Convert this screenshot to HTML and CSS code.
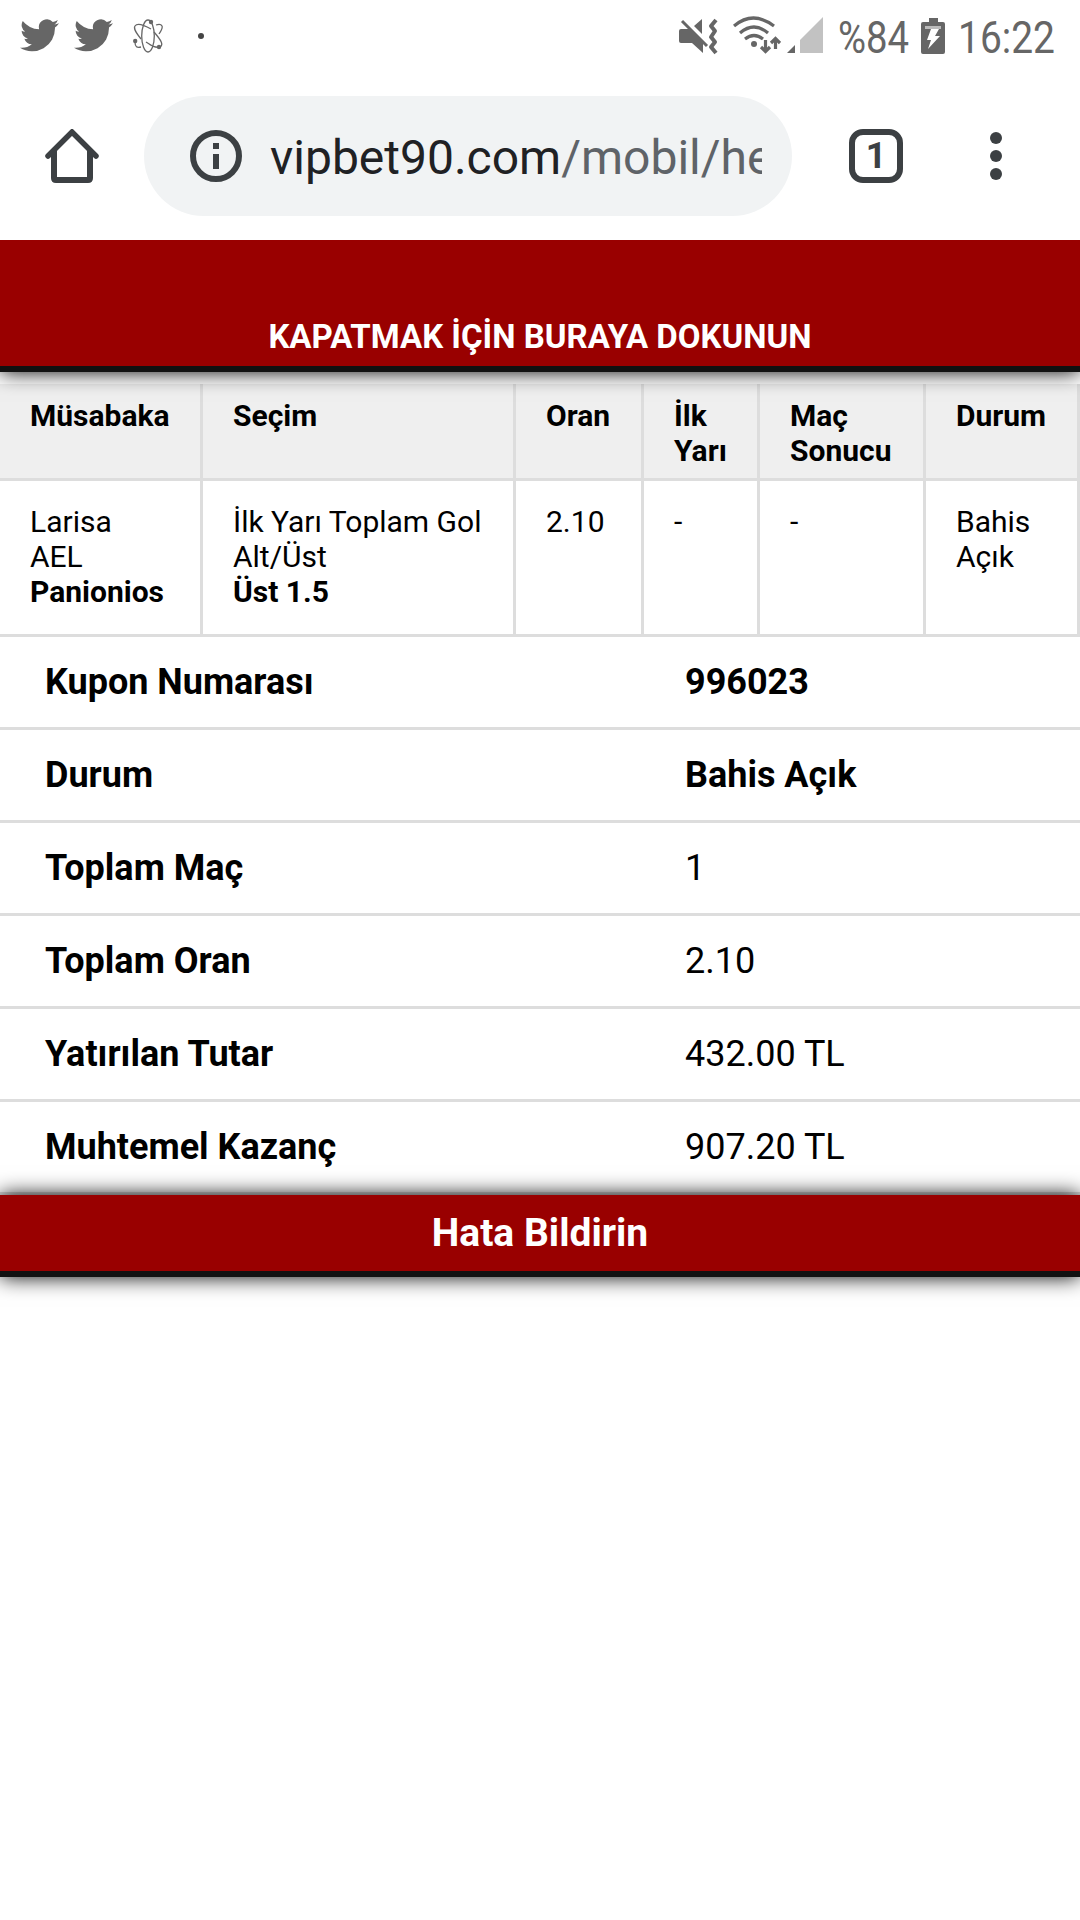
FILE: index.html
```html
<!DOCTYPE html>
<html lang="tr">
<head>
<meta charset="utf-8">
<title>Kupon</title>
<link rel="stylesheet" href="styles.css">
</head>
<body>
<header class="status">
  <svg class="bird" viewBox="0 0 24 20"><path d="M24 2.4a10 10 0 0 1-2.8.8A4.900 4.900 0 0 0 23.300.5a9.900 9.900 0 0 1-3.100 1.200 4.900 4.900 0 0 0-8.400 4.500A14 14 0 0 1 1.700 1a4.900 4.900 0 0 0 1.500 6.600 4.900 4.900 0 0 1-2.200-.6 4.900 4.900 0 0 0 3.900 4.900 5 5 0 0 1-2.200.1 4.900 4.900 0 0 0 4.600 3.400A9.900 9.900 0 0 1 0 17.500 14 14 0 0 0 21.500 5.100 10 10 0 0 0 24 2.400z"/></svg>
  <svg class="bird" viewBox="0 0 24 20"><path d="M24 2.4a10 10 0 0 1-2.800.8A4.900 4.900 0 0 0 23.300.5a9.900 9.900 0 0 1-3.100 1.200 4.900 4.900 0 0 0-8.400 4.500A14 14 0 0 1 1.700 1a4.900 4.900 0 0 0 1.500 6.600 4.900 4.900 0 0 1-2.200-.6 4.900 4.900 0 0 0 3.900 4.900 5 5 0 0 1-2.200.1 4.900 4.900 0 0 0 4.600 3.400A9.900 9.900 0 0 1 0 17.500 14 14 0 0 0 21.500 5.100 10 10 0 0 0 24 2.400z"/></svg>
  <svg class="atom" viewBox="0 0 30 34"><g fill="none" stroke="#666" stroke-width="1.300"><ellipse cx="15" cy="17" rx="6.300" ry="16"/><path d="M18 10C11 6 4 4 2 7s2 8 6 13M23 6c3-1 5-1 6 1s-1 5-3 8M13 23c6 4 9 6 14 5 4-2 1-7-6-15M8 28c-4 1-6 0-6-5"/></g><circle cx="18" cy="3" r="2.200"/><circle cx="2.200" cy="22" r="2.200"/><circle cx="26" cy="28" r="2.200"/></svg>
  <svg class="dot" viewBox="0 0 6 6"><circle cx="3" cy="3" r="3" fill="#444"/></svg>
  <svg class="mute" viewBox="0 0 39 38"><path d="M2 12h10l12 13v11L13 26H2q-2 0-2-2V14q0-2 2-2zM15 9l8-7v15z"/><path d="M3 4l25 25" fill="none" stroke="#666" stroke-width="3"/><path d="M37 3l-5 6 4 5-4 6 4 5-4 5 5 6" fill="none" stroke="#666" stroke-width="4" stroke-linejoin="round"/></svg>
  <svg class="wifi" viewBox="0 0 48 38"><g fill="none" stroke="#666" stroke-width="3.200"><path d="M1 10q19-16 40 0M7 17q14-12 28 0M12 23q9-7 18 0"/><path d="M32.500 24v10M28 31l4.500 4.500L37 31M42.500 33V23M38 27l4.500-4.500L47 27"/></g><circle cx="21" cy="28" r="3"/></svg>
  <svg class="signal" viewBox="0 0 36 36"><path d="M0 36l8-8v8z"/><path d="M13 36V23L36 0v36z" fill="#c2c2c2"/></svg>
  <span class="stat pct">%84</span>
  <svg class="battery" viewBox="0 0 24 36"><path d="M8 0h9v4h5q2 0 2 2v28q0 2-2 2H2q-2 0-2-2V6q0-2 2-2h6z"/><path d="M4 8h16v3H4z" fill="#bbb"/><path d="M10 11h8l-4 7h5L7 31l3-9H6z" fill="#fff"/></svg>
  <span class="stat clock">16:22</span>
</header>
<nav class="toolbar">
  <svg class="home" viewBox="0 0 54 54" fill="none" stroke="#3c4043" stroke-width="6"><path d="M9 20v29q0 2 2 2h32q2 0 2-2V20"/><path d="M3 27L27 3l24 24" stroke-linecap="round" stroke-width="5.500"/></svg>
  <div class="address">
    <svg class="info" viewBox="0 0 52 52"><circle cx="26" cy="26" r="23" fill="none" stroke="#3c4043" stroke-width="6"/><path d="M23 13h6v6h-6zM23 24h6v15h-6z" fill="#3c4043"/></svg>
    <div class="url">vipbet90.com<span class="path">/mobil/he</span></div>
  </div>
  <div class="tabs">1</div>
  <svg class="more" viewBox="0 0 12 48" fill="#3c4043"><circle cx="6" cy="6" r="6"/><circle cx="6" cy="24" r="6"/><circle cx="6" cy="42" r="6"/></svg>
</nav>
<main>
  <div class="close">KAPATMAK İÇİN BURAYA DOKUNUN</div>
  <table class="bets">
    <colgroup><col class="c1"><col class="c2"><col class="c3"><col class="c4"><col class="c5"><col class="c6"></colgroup>
    <tr><th>Müsabaka</th><th>Seçim</th><th>Oran</th><th>İlk<br>Yarı</th><th>Maç<br>Sonucu</th><th>Durum</th></tr>
    <tr><td>Larisa<br>AEL<br><b>Panionios</b></td><td>İlk Yarı Toplam Gol<br>Alt/Üst<br><b>Üst 1.5</b></td><td>2.10</td><td>-</td><td>-</td><td>Bahis<br>Açık</td></tr>
  </table>
  <dl class="summary">
    <div class="row"><dt>Kupon Numarası</dt><dd><b>996023</b></dd></div>
    <div class="row"><dt>Durum</dt><dd><b>Bahis Açık</b></dd></div>
    <div class="row"><dt>Toplam Maç</dt><dd>1</dd></div>
    <div class="row"><dt>Toplam Oran</dt><dd>2.10</dd></div>
    <div class="row"><dt>Yatırılan Tutar</dt><dd>432.00 TL</dd></div>
    <div class="row"><dt>Muhtemel Kazanç</dt><dd>907.20 TL</dd></div>
  </dl>
  <div class="report">Hata Bildirin</div>
</main>
</body>
</html>
```
FILE: styles.css
```css
* { box-sizing: border-box; }
body {
  margin: 0;
  width: 1080px;
  height: 1920px;
  overflow: hidden;
  background: #fff;
  color: #000;
  font-family: Roboto, "Liberation Sans", sans-serif;
}
svg { display: block; flex: none; }
b, th, dt { font-weight: 700; }

.status {
  display: flex;
  align-items: flex-start;
  height: 72px;
  padding-left: 20px;
  color: #666;
  fill: #666;
}
.bird { width: 39px; height: 33px; margin: 19px 15px 0 0; }
.atom { width: 30px; height: 34px; margin: 19px 0 0 5px; }
.dot { width: 6px; height: 6px; margin: 33px 0 0 35px; }
.mute { width: 39px; height: 38px; margin: 17px 0 0 475px; }
.wifi { width: 48px; height: 38px; margin: 16px 0 0 15px; }
.signal { width: 36px; height: 36px; margin: 17px 0 0 6px; }
.battery { width: 24px; height: 36px; margin: 18px 0 0 12px; }
.stat {
  flex: none;
  font-size: 44px;
  line-height: 52px;
  margin-top: 12px;
  transform: scaleX(.87);
  transform-origin: 0 0;
  white-space: nowrap;
}
.pct { width: 71px; margin-left: 15px; }
.clock { width: 100px; margin-left: 13px; transform: scaleX(.885); }

.toolbar {
  display: flex;
  align-items: center;
  height: 168px;
  padding-left: 45px;
}
.home { width: 54px; height: 54px; }
.address {
  display: flex;
  align-items: center;
  width: 648px;
  height: 120px;
  margin-left: 45px;
  padding-left: 46px;
  border-radius: 60px;
  background: #f1f3f4;
}
.info { width: 52px; height: 52px; }
.url {
  width: 492px;
  margin-left: 28px;
  overflow: hidden;
  white-space: nowrap;
  font-size: 48px;
  line-height: 60px;
  padding-top: 4px;
  color: #202124;
}
.path { color: #5f6368; }
.tabs {
  width: 54px;
  height: 54px;
  margin-left: 57px;
  border: 6px solid #3c4043;
  border-radius: 14px;
  font-size: 36px;
  font-weight: 700;
  line-height: 43px;
  text-align: center;
  color: #3c4043;
}
.more { width: 12px; height: 48px; margin-left: 87px; }

.close, .report {
  position: relative;
  background: #900;
  border-bottom: 6px solid #111;
  box-shadow: 0 0 20px #000;
  color: #fff;
  font-weight: 700;
  text-align: center;
}
.close {
  height: 132px;
  padding-top: 77px;
  font-size: 33px;
  line-height: 40px;
  clip-path: inset(0 0 -40px 0);
}

.bets {
  width: 1080px;
  margin-top: 12px;
  table-layout: fixed;
  border-collapse: separate;
  border-spacing: 0;
  font-size: 30px;
  line-height: 35px;
}
.c1 { width: 203px; }
.c2 { width: 313px; }
.c3 { width: 128px; }
.c4 { width: 116px; }
.c5 { width: 166px; }
.c6 { width: 154px; }
.bets th, .bets td {
  border-right: 3px solid #ddd;
  border-bottom: 3px solid #ddd;
  text-align: left;
  vertical-align: top;
  white-space: nowrap;
}
.bets th { height: 97px; padding: 14px 0 0 30px; background: #efefef; }
.bets td { height: 156px; padding: 23px 0 0 30px; }

.summary { margin: 0; font-size: 36px; line-height: 42px; }
.row {
  display: flex;
  height: 93px;
  padding: 24px 0 0 45px;
  border-bottom: 3px solid #ddd;
}
.row dt { width: 640px; }
.row dd { margin: 0; }

.report {
  height: 82px;
  padding-top: 15px;
  font-size: 39px;
  line-height: 46px;
}
```
